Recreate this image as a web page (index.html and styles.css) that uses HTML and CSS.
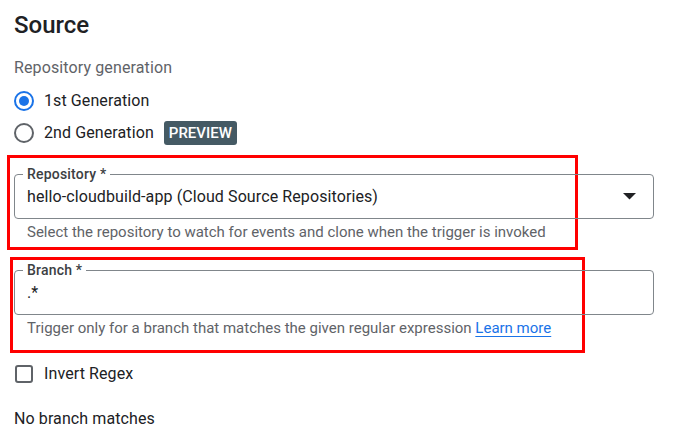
FILE: index.html
```html
<!DOCTYPE html>
<html lang="en">
<head>
<meta charset="utf-8">
<title>Source</title>
<link rel="stylesheet" href="styles.css">
</head>
<body>
<main class="page">
  <h1 class="title">Source</h1>
  <div class="section-label">Repository generation</div>
  <div class="radio-group">
    <label class="radio-row">
      <span class="radio radio-on"><span class="radio-dot"></span></span>
      <span class="radio-text">1st Generation</span>
    </label>
    <label class="radio-row">
      <span class="radio"></span>
      <span class="radio-text">2nd Generation</span>
      <span class="chip">PREVIEW</span>
    </label>
  </div>

  <div class="group group-repo">
    <span class="mark mark-repo"></span>
    <div class="field">
      <span class="field-label">Repository *</span>
      <span class="field-value">hello-cloudbuild-app (Cloud Source Repositories)</span>
      <svg class="arrow" width="13" height="7" viewBox="0 0 13 7"><path d="M0 0h13L6.5 6.6z" fill="#202124"/></svg>
    </div>
    <div class="hint">Select the repository to watch for events and clone when the trigger is invoked</div>
  </div>

  <div class="group group-branch">
    <span class="mark mark-branch"></span>
    <div class="field">
      <span class="field-label">Branch *</span>
      <span class="field-value">.*</span>
    </div>
    <div class="hint">Trigger only for a branch that matches the given regular expression <a class="link" href="#">Learn more</a></div>
  </div>

  <label class="check-row">
    <span class="checkbox"></span>
    <span class="check-text">Invert Regex</span>
  </label>

  <p class="status">No branch matches</p>
</main>
</body>
</html>
```

FILE: styles.css
```css
* { box-sizing: border-box; }

html, body {
  margin: 0;
  padding: 0;
  background: #ffffff;
}

body {
  font-family: Roboto, "Liberation Sans", Arial, sans-serif;
  color: #202124;
}

.page {
  padding: 9px 19px 0 14px;
}

.title {
  margin: 0;
  font-size: 24px;
  line-height: 32px;
  font-weight: 500;
  color: #202124;
}

.section-label {
  margin-top: 15px;
  font-size: 16px;
  line-height: 24px;
  letter-spacing: 0.12px;
  color: #5f6368;
}

.radio-group {
  margin-top: 5px;
  display: flex;
  flex-direction: column;
}

.radio-row {
  display: flex;
  align-items: center;
  height: 32px;
}

.radio {
  width: 20px;
  height: 20px;
  border: 2px solid #5f6368;
  border-radius: 50%;
  display: flex;
  align-items: center;
  justify-content: center;
  flex: none;
}

.radio-on {
  border-color: #1a73e8;
}

.radio-dot {
  width: 10px;
  height: 10px;
  border-radius: 50%;
  background: #1a73e8;
}

.radio-text {
  margin-left: 10px;
  font-size: 16px;
  line-height: 24px;
  letter-spacing: 0.1px;
  color: #202124;
}

.chip {
  margin-left: 10px;
  height: 24px;
  padding: 0 5px;
  border-radius: 3px;
  background: #455a64;
  color: #ffffff;
  font-size: 15px;
  font-weight: 500;
  line-height: 24px;
}

.group {
  position: relative;
  width: 640px;
}

.group-repo {
  margin-top: 25px;
}

.group-branch {
  margin-top: 29px;
}

.mark {
  position: absolute;
  border: 3px solid #ff0000;
  pointer-events: none;
}

.mark-repo {
  left: -7px;
  top: -19px;
  width: 571px;
  height: 95px;
}

.mark-branch {
  left: -4px;
  top: -13px;
  width: 575px;
  height: 96px;
}

.field {
  position: relative;
  height: 45px;
  border: 1px solid #80868b;
  border-radius: 4px;
  padding: 0 17px 0 12px;
  display: flex;
  align-items: center;
}

.field-label {
  position: absolute;
  left: 8px;
  top: -9px;
  padding: 0 4px;
  background: #ffffff;
  font-size: 14px;
  line-height: 16px;
  font-weight: 500;
  letter-spacing: 0.2px;
  color: #3c4043;
}

.field-value {
  flex: 1;
  font-size: 16px;
  line-height: 24px;
  letter-spacing: 0.1px;
  color: #202124;
}

.arrow {
  flex: none;
  display: block;
}

.hint {
  margin-top: 5px;
  padding-left: 13px;
  font-size: 15px;
  line-height: 17px;
  color: #5f6368;
}

.link {
  color: #1a73e8;
  text-decoration: underline;
  text-underline-offset: 3px;
}

.check-row {
  margin-top: 25px;
  display: flex;
  align-items: center;
  height: 24px;
}

.checkbox {
  width: 18px;
  height: 18px;
  margin-left: 1px;
  margin-right: 1px;
  border: 2px solid #5f6368;
  border-radius: 3px;
  flex: none;
}

.check-text {
  margin-left: 10px;
  font-size: 16px;
  line-height: 24px;
  letter-spacing: 0.1px;
  color: #202124;
}

.status {
  margin: 21px 0 0;
  font-size: 16px;
  line-height: 24px;
  letter-spacing: 0.1px;
  color: #202124;
}
```
